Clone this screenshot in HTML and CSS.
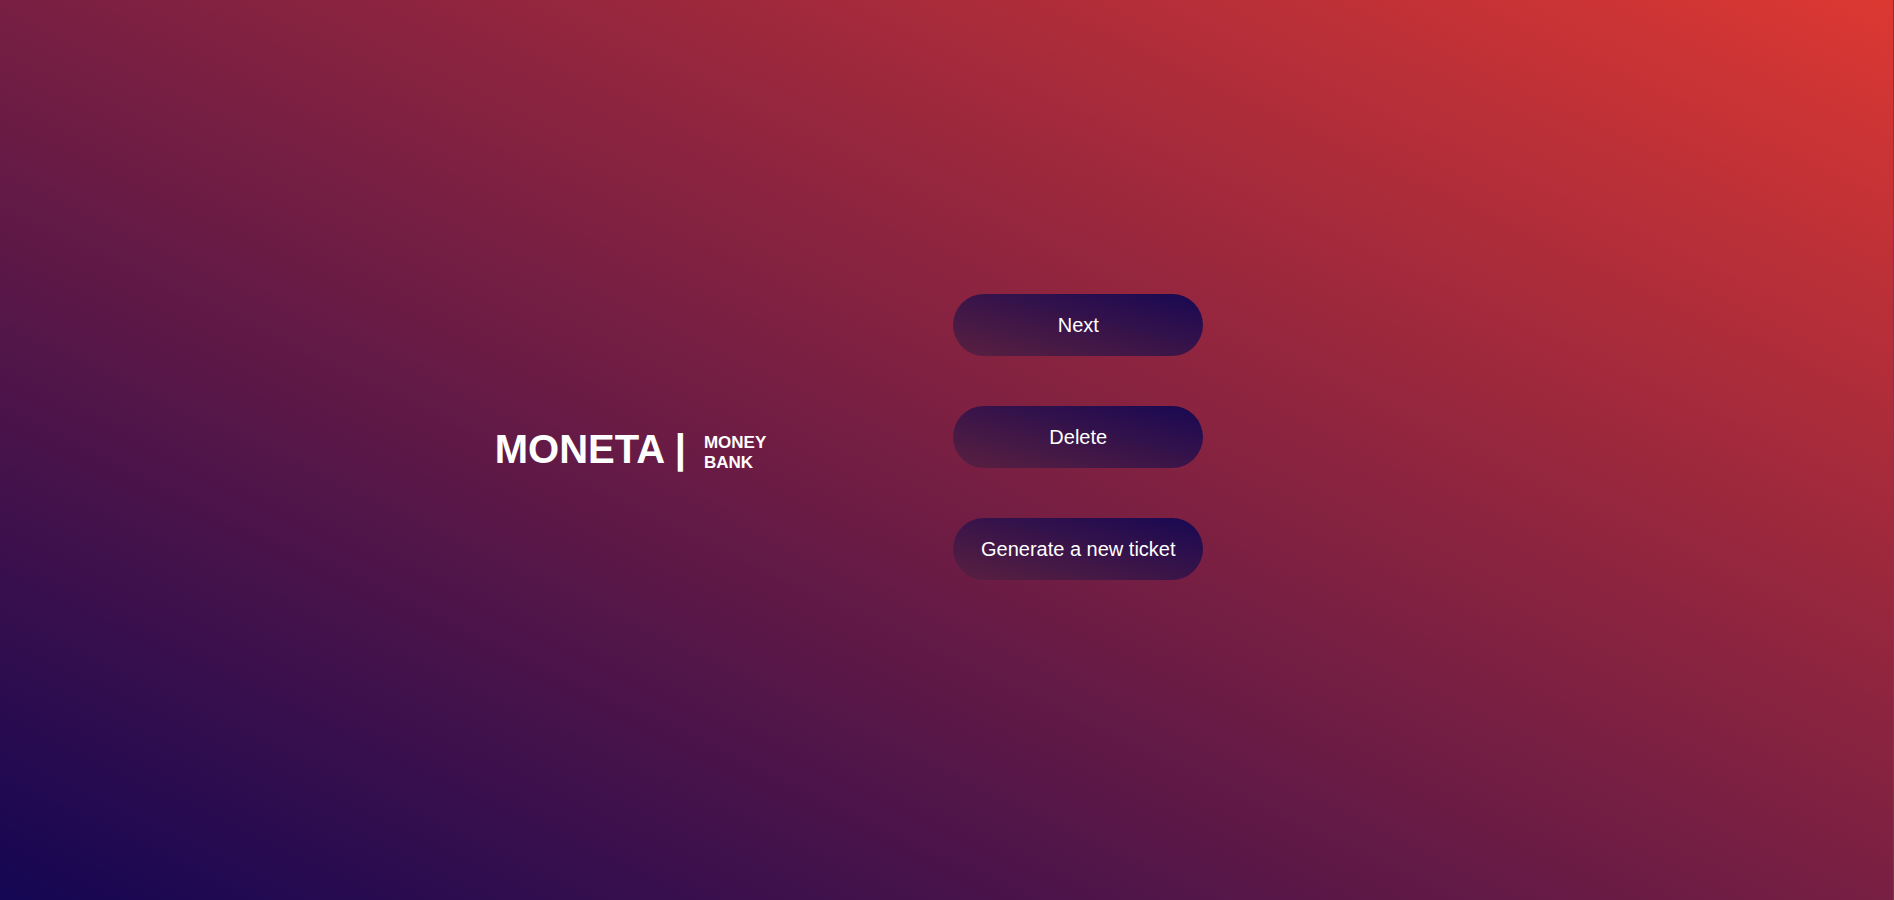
FILE: index.html
```html
<!DOCTYPE html>
<html lang="en">
<head>
<meta charset="utf-8">
<meta name="viewport" content="width=device-width, initial-scale=1">
<title>Moneta Money Bank</title>
<link rel="stylesheet" href="styles.css">
</head>
<body>
<main class="page">
  <h1 class="logo">
    <span class="logo-name">MONETA |</span>
    <span class="logo-tagline">MONEY<br>BANK</span>
  </h1>
  <div class="actions">
    <button class="action" type="button">Next</button>
    <button class="action" type="button">Delete</button>
    <button class="action" type="button">Generate a new ticket</button>
  </div>
</main>
</body>
</html>
```

FILE: styles.css
```css
* {
  box-sizing: border-box;
}

body {
  margin: 0;
  font-family: "Liberation Sans", Arial, sans-serif;
  color: #fff;
}

.page {
  display: flex;
  align-items: center;
  justify-content: center;
  gap: 187px;
  min-height: 100vh;
  padding: 0 195px 2px 0;
  border-right: 1px solid #5a4a4c;
  background: linear-gradient(to top right, #140653, #dc3832);
}

.logo {
  display: flex;
  align-items: center;
  gap: 18px;
  margin: 0;
  font-weight: 700;
}

.logo-name {
  font-size: 40px;
  line-height: 48px;
}

.logo-tagline {
  padding-top: 8px;
  font-size: 17px;
  line-height: 20px;
}

.actions {
  display: flex;
  flex-direction: column;
  gap: 50px;
  padding-bottom: 24px;
}

.action {
  width: 250px;
  padding: 19px 24px;
  border: 0;
  border-radius: 32px;
  background: linear-gradient(to top right, #5a2040, #180852);
  color: #fff;
  font-family: inherit;
  font-size: 20px;
  line-height: 24px;
  white-space: nowrap;
  cursor: pointer;
}
```
